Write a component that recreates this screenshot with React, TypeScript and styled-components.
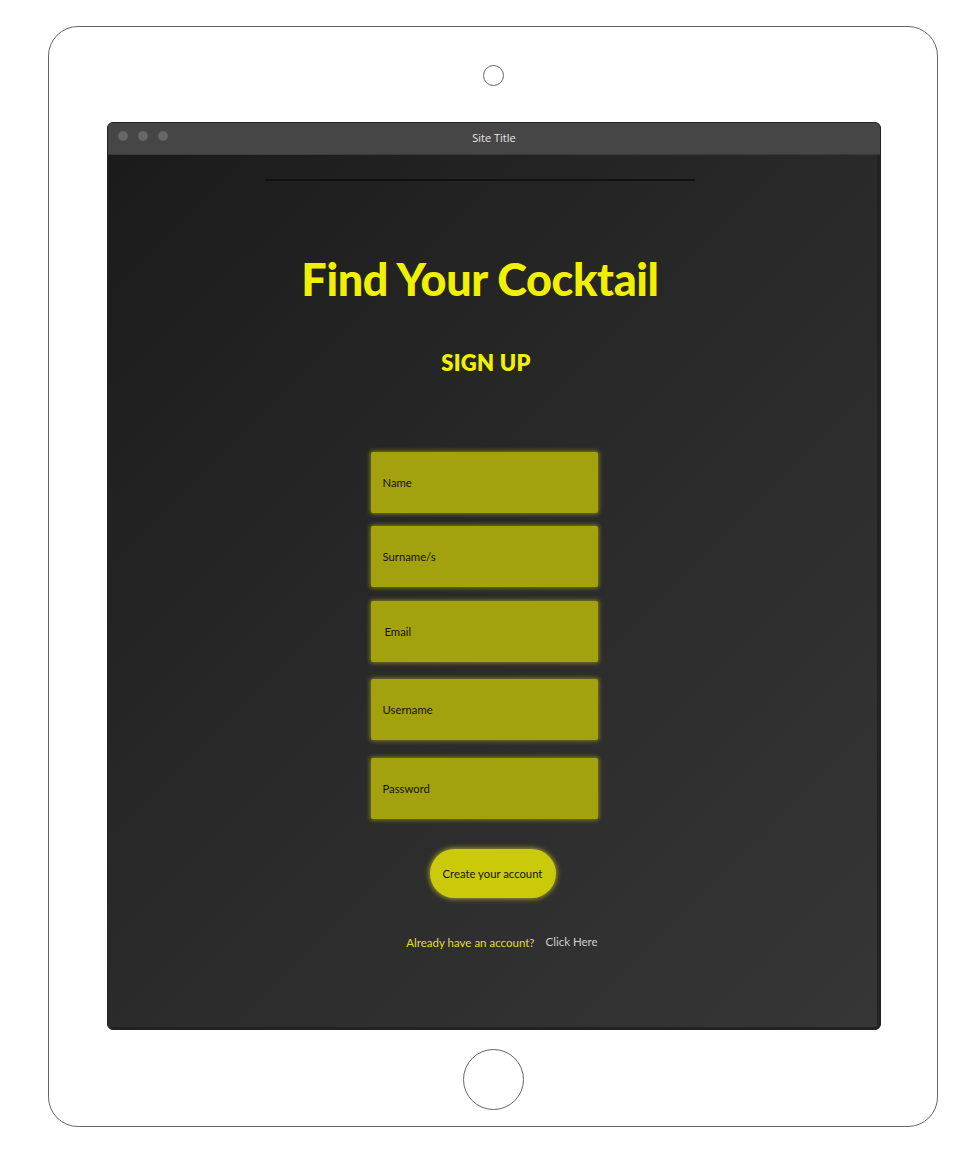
import React from "react";
import styled, { createGlobalStyle } from "styled-components";

const Global = createGlobalStyle`
  html, body { margin: 0; padding: 0; background: #fff; }
  body { font-family: "Lato", "Open Sans", sans-serif; }
  * { box-sizing: border-box; }
`;

const Page = styled.div`
  padding: 26px 0 0 48px;
`;

const Tablet = styled.div`
  width: 890px;
  height: 1101px;
  border: 1px solid #666;
  border-radius: 30px;
  display: flex;
  flex-direction: column;
  align-items: center;
  padding-top: 38px;
`;

const Camera = styled.div`
  width: 21px;
  height: 21px;
  border: 1px solid #666;
  border-radius: 50%;
`;

const HomeButton = styled.div`
  width: 61px;
  height: 61px;
  border: 1px solid #666;
  border-radius: 50%;
  margin-top: 19px;
`;

const Window = styled.div`
  width: 774px;
  height: 908px;
  margin-top: 36px;
  margin-left: 2px;
  border-radius: 6px;
  overflow: hidden;
  display: flex;
  flex-direction: column;
  background: #2a2a2a;
  border: 1px solid #222;
`;

const TitleBar = styled.div`
  height: 32px;
  background: #464646;
  border-bottom: 1px solid #3a3a3a;
  display: flex;
  align-items: flex-start;
  padding: 8px 0 0 10px;
  position: relative;
`;

const Dot = styled.span`
  width: 10px;
  height: 10px;
  border-radius: 50%;
  background: #666;
  margin-right: 10px;
`;

const SiteTitle = styled.div`
  position: absolute;
  left: 0;
  right: 0;
  top: 7px;
  text-align: center;
  color: #e6e6e6;
  font-size: 11px;
  font-family: "Open Sans", sans-serif;
  pointer-events: none;
`;

const Content = styled.div`
  flex: 1;
  background: linear-gradient(135deg, #1b1b1b 0%, #2a2a2a 50%, #363636 100%);
  border-right: 3px solid #222;
  border-bottom: 2px solid #222;
  padding: 24px 0 0 157px;
`;

const Column = styled.div`
  width: 430px;
  display: flex;
  flex-direction: column;
  align-items: center;
`;

const Rule = styled.div`
  width: 430px;
  height: 2px;
  background: #111;
`;

const Heading = styled.h1`
  margin: 70px 0 0;
  font-family: "Lato", sans-serif;
  font-weight: 900;
  font-size: 45px;
  line-height: 56px;
  color: #f0f000;
  letter-spacing: -0.4px;
`;

const SubHeading = styled.h2`
  margin: 43px 0 0 12px;
  font-family: "Lato", sans-serif;
  font-weight: 800;
  font-size: 22px;
  line-height: 26px;
  color: #f0f000;
  letter-spacing: 0.3px;
`;

const Fields = styled.div`
  display: flex;
  flex-direction: column;
  margin: 76px 0 0 8px;
  gap: 13px;
`;

const Field = styled.div<{ $gap?: number; $indent?: number }>`
  width: 227px;
  height: 61px;
  margin-top: ${(p) => p.$gap ?? 0}px;
  background: #a3a10e;
  border-radius: 2px;
  box-shadow: 0 0 4px 1px rgba(200, 200, 20, 0.55);
  display: flex;
  align-items: center;
  padding-left: ${(p) => p.$indent ?? 12}px;
  font-family: "Lato", sans-serif;
  font-size: 11.3px;
  color: #141400;
`;

const CreateButton = styled.button`
  margin: 30px 0 0 25px;
  width: 126px;
  height: 49px;
  border: none;
  border-radius: 25px;
  background: #cbca0a;
  box-shadow: 0 0 5px 1px rgba(230, 230, 40, 0.6);
  font-family: "Lato", sans-serif;
  font-size: 11.3px;
  color: #141400;
  padding: 0;
`;

const Footer = styled.div`
  margin: 37px 0 0 44px;
  display: flex;
  align-items: baseline;
  gap: 11px;
  font-family: "Lato", sans-serif;
  font-size: 11.5px;
`;

const Already = styled.span`
  color: #e2dc30;
  position: relative;
  top: 1px;
`;

const ClickHere = styled.span`
  color: #cfcfcf;
`;

export default function App() {
  return (
    <>
      <Global />
      <Page>
        <Tablet>
          <Camera />
          <Window>
            <TitleBar>
              <Dot />
              <Dot />
              <Dot />
              <SiteTitle>Site Title</SiteTitle>
            </TitleBar>
            <Content>
              <Column>
                <Rule />
                <Heading>Find Your Cocktail</Heading>
                <SubHeading>SIGN UP</SubHeading>
                <Fields>
                  <Field>Name</Field>
                  <Field>Surname/s</Field>
                  <Field $indent={14} $gap={1}>Email</Field>
                  <Field $gap={4}>Username</Field>
                  <Field $gap={5}>Password</Field>
                </Fields>
                <CreateButton>Create your account</CreateButton>
                <Footer>
                  <Already>Already have an account?</Already>
                  <ClickHere>Click Here</ClickHere>
                </Footer>
              </Column>
            </Content>
          </Window>
          <HomeButton />
        </Tablet>
      </Page>
    </>
  );
}
